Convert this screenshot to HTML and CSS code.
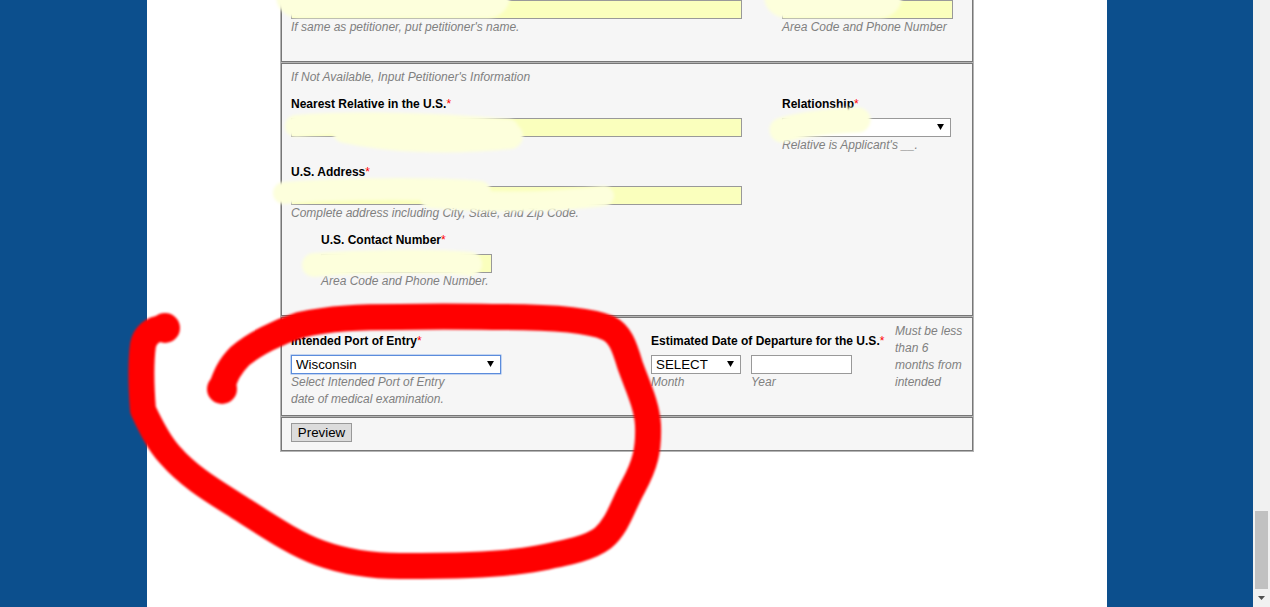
FILE: index.html
```html
<!DOCTYPE html>
<html lang="en">
<head>
<meta charset="utf-8">
<title>Visa application form</title>
<link rel="stylesheet" href="styles.css">
</head>
<body>
<div class="page">
  <main class="column">
    <form class="panel">
      <section class="sec sec-first">
        <div class="row row-split">
          <div class="field"><input class="ctl fill w-full" type="text"><span class="help">If same as petitioner, put petitioner's name.</span></div>
          <div class="field"><input class="ctl fill w-phone" type="text"><span class="help">Area Code and Phone Number</span></div>
        </div>
      </section>
      <section class="sec sec-rel">
        <p class="help note-line">If Not Available, Input Petitioner's Information</p>
        <div class="row row-split">
          <div class="field"><label class="lab">Nearest Relative in the U.S.<em>*</em></label><input class="ctl fill w-full" type="text"></div>
          <div class="field"><label class="lab">Relationship<em>*</em></label>
            <div class="sel w-rel"><select class="ctl"><option></option></select><svg class="arrow" viewBox="0 0 8 7"><path d="M0 0h8L4 7z"/></svg></div>
            <span class="help">Relative is Applicant's __.</span></div>
        </div>
        <div class="row">
          <div class="field"><label class="lab">U.S. Address<em>*</em></label><input class="ctl fill w-full" type="text"><span class="help">Complete address including City, State, and Zip Code.</span></div>
        </div>
        <div class="row row-indent">
          <div class="field"><label class="lab">U.S. Contact Number<em>*</em></label><input class="ctl fill w-contact" type="text"><span class="help">Area Code and Phone Number.</span></div>
        </div>
      </section>
      <section class="sec sec-port">
        <div class="field f-port"><label class="lab">Intended Port of Entry<em>*</em></label>
          <div class="sel w-port"><select class="ctl focus"><option>Wisconsin</option></select><svg class="arrow" viewBox="0 0 8 7"><path d="M0 0h8L4 7z"/></svg></div>
          <span class="help">Select Intended Port of Entry<br>date of medical examination.</span></div>
        <div class="field f-date"><label class="lab">Estimated Date of Departure for the U.S.<em>*</em></label>
          <div class="date-row">
            <div class="field f-month"><div class="sel w-month"><select class="ctl"><option>SELECT</option></select><svg class="arrow" viewBox="0 0 8 7"><path d="M0 0h8L4 7z"/></svg></div><span class="help">Month</span></div>
            <div class="field"><input class="ctl w-year" type="text"><span class="help">Year</span></div>
          </div></div>
        <p class="help f-note">Must be less than 6 months from intended</p>
      </section>
      <section class="sec sec-btn">
        <button class="btn" type="button">Preview</button>
      </section>
    </form>
  </main>
  <aside class="scrollbar"><span class="thumb"></span><svg class="sb-arrow" viewBox="0 0 7 4"><path d="M0 0h7L3.500 4z"/></svg></aside>
</div>
<svg class="ink" viewBox="0 0 1270 607" aria-hidden="true">
  <defs>
    <filter id="soft" x="-10%" y="-30%" width="120%" height="160%"><feGaussianBlur stdDeviation="1.800"/></filter>
    <filter id="edge" x="-10%" y="-10%" width="120%" height="120%"><feGaussianBlur stdDeviation="0.900"/></filter>
  </defs>
  <g class="smudge" filter="url(#soft)">
    <path d="M298 -4H488" stroke-width="44"/>
    <path d="M296 126C340 122 420 122 508 130" stroke-width="22"/>
    <path d="M345 130C390 140 450 142 510 136" stroke-width="26"/>
    <path d="M782 130C800 125 830 121 858 120" stroke-width="25"/>
    <path d="M786 -4H880" stroke-width="44"/>
    <path d="M284 193C340 188 440 188 480 192" stroke-width="22"/>
    <path d="M430 198C490 203 550 203 604 196" stroke-width="20"/>
    <path d="M314 265C350 262 430 260 470 264" stroke-width="24"/>
  </g>
  <g filter="url(#edge)">
    <path class="marker" d="M221 389C225 378 228 368 240 356C254 344 278 332 300 325C330 318 360 317 400 317C450 316 480 317 500 317C550 317 590 320 608 328C620 334 624 345 630 365C637 385 647 405 648 425C649 450 645 465 633 487C622 507 618 525 603 538C590 548 570 552 540 558C500 566 440 566 400 566C370 566 345 562 320 553C295 544 270 527 240 508C215 492 190 478 170 455C158 442 150 425 143 410C141 385 141 360 143 345C145 335 152 329 163 328"/>
    <circle class="dot" cx="165" cy="328" r="15"/>
    <circle class="dot" cx="222" cy="389" r="15"/>
  </g>
</svg>
</body>
</html>
```
FILE: styles.css
```css
* { box-sizing: border-box; }
html, body { margin: 0; height: 607px; overflow: hidden; }
body { background: #0c4f8d; font-family: "Liberation Sans", Arial, sans-serif; font-size: 12px; line-height: 17px; position: relative; }
.page { display: grid; grid-template-columns: 147px 960px 146px 17px; height: 607px; }
.column { grid-column: 2; background: #fff; padding-left: 133px; overflow: hidden; }
.panel { width: 694px; height: 452px; display: flex; flex-direction: column; gap: 1px; background: #b4b4b4; border: 1px solid #b4b4b4; border-top: 0; }
.sec { background: #f6f6f6; border: 1px solid #777; padding: 5px 9px; }
.sec-first { height: 62px; border-top: 0; padding: 0 9px; }
.sec-rel { height: 253px; }
.sec-port { height: 99px; display: flex; }
.sec-btn { height: 34px; }
.row { margin-bottom: 10px; }
.row-split { display: flex; gap: 40px; }
.row-indent { padding-left: 30px; }
.field { display: flex; flex-direction: column; align-items: flex-start; flex-shrink: 0; }
.lab { font-weight: bold; color: #000; margin-bottom: 5px; display: block; }
.lab em { color: #f00; font-style: normal; font-weight: normal; }
.help { color: #808080; font-style: italic; display: block; }
.note-line { margin: 0 0 10px; }
.ctl { height: 19px; border: 1px solid #999; border-radius: 0; background: #fff; font: 13.33px "Liberation Sans", Arial, sans-serif; padding: 0 4px; margin: 0; display: block; color: #000; outline: 0; }
.fill { background: #faffbd; }
.w-full { width: 451px; }
.w-phone { width: 171px; }
.w-contact { width: 171px; }
.sel { position: relative; display: block; }
.sel select { width: 100%; appearance: none; -webkit-appearance: none; }
.arrow { position: absolute; top: 6px; right: 7px; width: 7px; height: 6px; fill: #000; }
.w-rel { width: 169px; }
.w-port { width: 210px; }
.w-month { width: 90px; }
.w-year { width: 101px; }
.focus { border-color: #5b8cdc; box-shadow: 0 0 0 0.5px #8fb2ea; }
.f-port { width: 360px; padding-top: 10px; }
.f-date { width: 244px; padding-top: 10px; }
.date-row { display: flex; gap: 10px; }
.f-note { margin: 0; width: 68px; flex-shrink: 0; }
.btn { width: 61px; height: 19px; padding: 0; border: 1px solid #999; background: #dcdcdc; font: 13.33px "Liberation Sans", Arial, sans-serif; color: #000; display: block; }
.scrollbar { grid-column: 4; background: #f1f1f1; position: relative; }
.thumb { position: absolute; left: 2px; top: 511px; width: 13px; height: 78px; background: #c1c1c1; }
.sb-arrow { position: absolute; left: 5px; top: 596px; width: 7px; height: 4px; fill: #505050; }
.ink { position: absolute; left: 0; top: 0; width: 1270px; height: 607px; pointer-events: none; }
.smudge path { fill: none; stroke: #fdffdc; stroke-linecap: round; }
.marker { fill: none; stroke: #f00; stroke-width: 26; stroke-linecap: round; stroke-linejoin: round; }
.dot { fill: #f00; }
```
